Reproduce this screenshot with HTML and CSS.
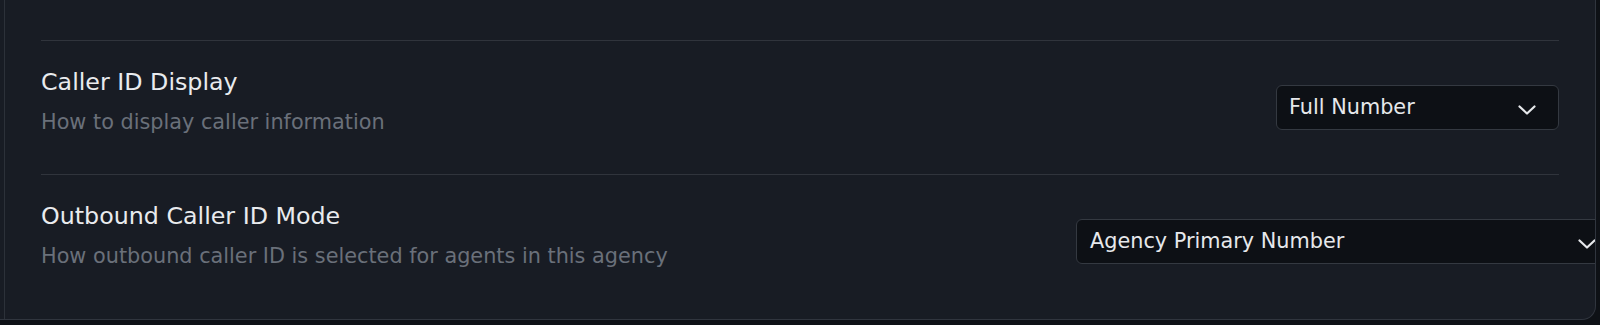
FILE: index.html
```html
<!DOCTYPE html>
<html lang="en">
<head>
<meta charset="utf-8">
<title>Caller ID Settings</title>
<link rel="stylesheet" href="styles.css">
</head>
<body>
<div class="card">
  <div class="card-inner">
    <div class="row">
      <div class="text">
        <div class="title">Caller ID Display</div>
        <div class="desc">How to display caller information</div>
      </div>
      <div class="select select-sm">
        <span class="value">Full Number</span>
        <svg class="chev" width="18" height="10" viewBox="0 0 18 10"><polyline points="1.5,1.5 9,8.5 16.5,1.5" fill="none" stroke="#e6e8eb" stroke-width="2.2" stroke-linecap="round" stroke-linejoin="round"/></svg>
      </div>
    </div>
    <div class="row">
      <div class="text">
        <div class="title">Outbound Caller ID Mode</div>
        <div class="desc">How outbound caller ID is selected for agents in this agency</div>
      </div>
      <div class="select select-lg">
        <span class="value">Agency Primary Number</span>
        <svg class="chev" width="18" height="10" viewBox="0 0 18 10"><polyline points="1.5,1.5 9,8.5 16.5,1.5" fill="none" stroke="#e6e8eb" stroke-width="2.2" stroke-linecap="round" stroke-linejoin="round"/></svg>
      </div>
    </div>
  </div>
</div>
</body>
</html>
```

FILE: styles.css
```css
* { box-sizing: border-box; }

html, body {
  margin: 0;
  padding: 0;
}

body {
  width: 1600px;
  height: 325px;
  overflow: hidden;
  background: #0e1116;
  font-family: "DejaVu Sans", "Liberation Sans", sans-serif;
}

.card {
  width: 1596px;
  height: 320px;
  background: #181c24;
  border-right: 1px solid #30353e;
  border-bottom: 1px solid #30353e;
  border-bottom-right-radius: 14px;
  overflow: hidden;
}

.card-inner {
  margin-left: 4px;
  height: 100%;
  border-left: 1px solid #2c3139;
  padding: 40px 36px 0 36px;
  overflow: hidden;
}

.row {
  display: flex;
  align-items: center;
  justify-content: space-between;
  border-top: 1px solid #30343c;
  padding: 25px 0;
  height: 134px;
}

.text {
  display: flex;
  flex-direction: column;
  padding-bottom: 13px;
}

.title {
  font-size: 23.75px;
  line-height: 32px;
  color: #e9ebee;
}

.desc {
  margin-top: 10px;
  font-size: 20.8px;
  line-height: 28px;
  color: #6a707a;
}

.select {
  flex: none;
  display: flex;
  align-items: center;
  justify-content: space-between;
  height: 45px;
  padding: 0 22px 0 12px;
  background: #0d1015;
  border: 1px solid #343941;
  border-radius: 6px;
  color: #e6e8eb;
  font-size: 20.8px;
}

.select-sm {
  width: 283px;
}

.select-lg {
  width: 543px;
  margin-right: -60px;
  padding-left: 13px;
}

.value {
  line-height: 28px;
  padding-bottom: 2px;
}

.chev {
  display: block;
  margin-top: 4px;
}
```
